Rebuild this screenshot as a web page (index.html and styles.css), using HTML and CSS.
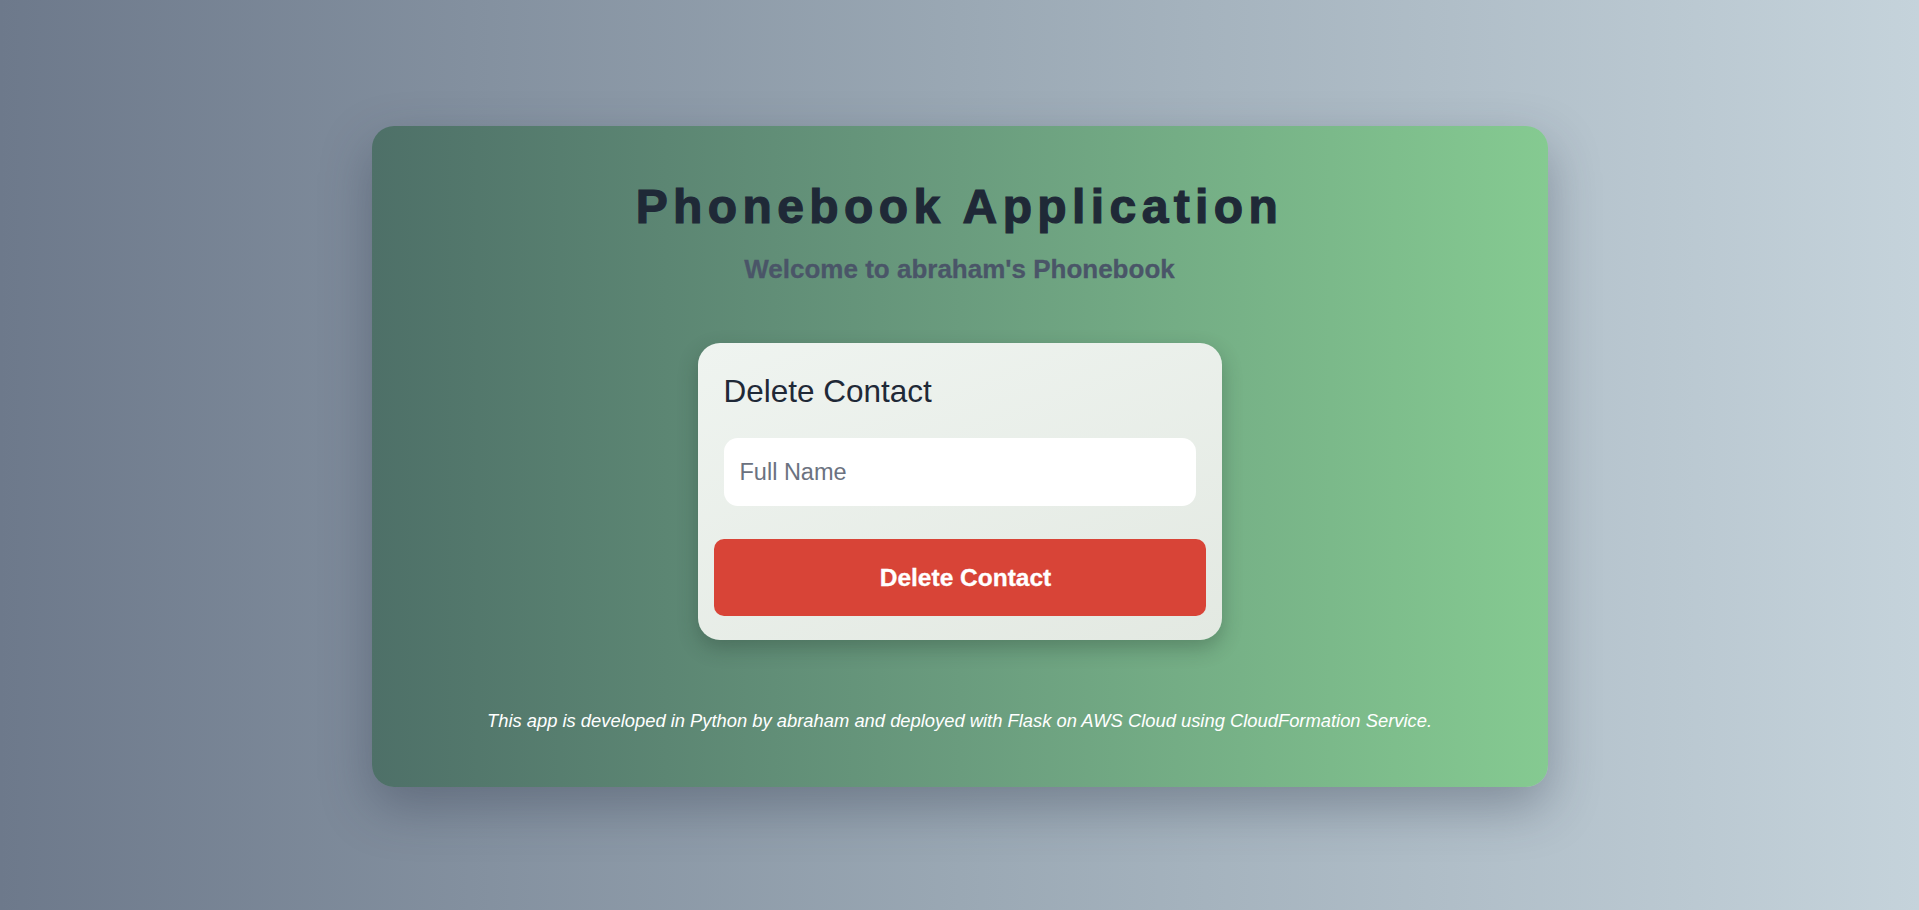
FILE: index.html
```html
<!DOCTYPE html>
<html lang="en">
<head>
<meta charset="utf-8">
<title>Phonebook Application</title>
<link rel="stylesheet" href="styles.css">
</head>
<body>
<main class="app">
  <h1 class="title">Phonebook Application</h1>
  <h2 class="welcome">Welcome to abraham's Phonebook</h2>
  <form class="panel">
    <h3 class="panel-title">Delete Contact</h3>
    <input class="field" type="text" placeholder="Full Name">
    <button class="btn-delete" type="button">Delete Contact</button>
  </form>
  <p class="footer">This app is developed in Python by abraham and deployed with Flask on AWS Cloud using CloudFormation Service.</p>
</main>
</body>
</html>
```
FILE: styles.css
```css
* { box-sizing: border-box; }
html, body { margin: 0; padding: 0; }
body {
  height: 910px;
  font-family: "Liberation Sans", Arial, sans-serif;
  background: linear-gradient(90deg, #6d798b 0%, #9aa8b4 50%, #c5d3db 100%);
  display: flex;
  align-items: center;
  justify-content: center;
}
.app {
  width: 1176px;
  height: 661px;
  margin-top: 3px;
  border-radius: 22px;
  background: linear-gradient(90deg, #4e7068 0%, #6a9c7e 50%, #85ca91 100%);
  box-shadow: 0 20px 50px rgba(40, 50, 70, 0.35);
  display: flex;
  flex-direction: column;
  align-items: center;
  padding-top: 52px;
}
.title {
  margin: 0;
  font-size: 48px;
  line-height: 58px;
  font-weight: 700;
  letter-spacing: 5.4px;
  color: #1f2937;
  -webkit-text-stroke: 1.2px #1f2937;
}
.welcome {
  margin: 17px 0 0;
  font-size: 26px;
  line-height: 32px;
  font-weight: 700;
  color: #4a5568;
  -webkit-text-stroke: 0.3px #4a5568;
}
.panel {
  margin-top: 58px;
  width: 524px;
  height: 297px;
  padding: 30px 16px 0;
  border-radius: 22px;
  background: linear-gradient(160deg, #eff4f0 0%, #e3e9e2 100%);
  box-shadow: 0 8px 20px rgba(30, 50, 40, 0.3);
  display: flex;
  flex-direction: column;
}
.panel-title {
  margin: 0 10px;
  font-size: 31.5px;
  line-height: 36px;
  font-weight: 400;
  color: #1f2937;
}
.field {
  margin: 29px 10px 0;
  height: 68px;
  border: none;
  border-radius: 14px;
  background: #ffffff;
  padding: 0 16px;
  font-family: "Liberation Sans", Arial, sans-serif;
  font-size: 23.5px;
  color: #1f2937;
  outline: none;
}
.field::placeholder { color: #6b7280; }
.btn-delete {
  margin-top: 33px;
  height: 77px;
  border: none;
  border-radius: 10px;
  padding: 0 0 0 12px;
  background: #d84437;
  color: #ffffff;
  font-family: "Liberation Sans", Arial, sans-serif;
  font-size: 24.5px;
  font-weight: 700;
  -webkit-text-stroke: 0.3px #ffffff;
}
.footer {
  margin: auto 0 55px;
  font-size: 18.36px;
  line-height: 22px;
  font-style: italic;
  color: #ffffff;
}
```
